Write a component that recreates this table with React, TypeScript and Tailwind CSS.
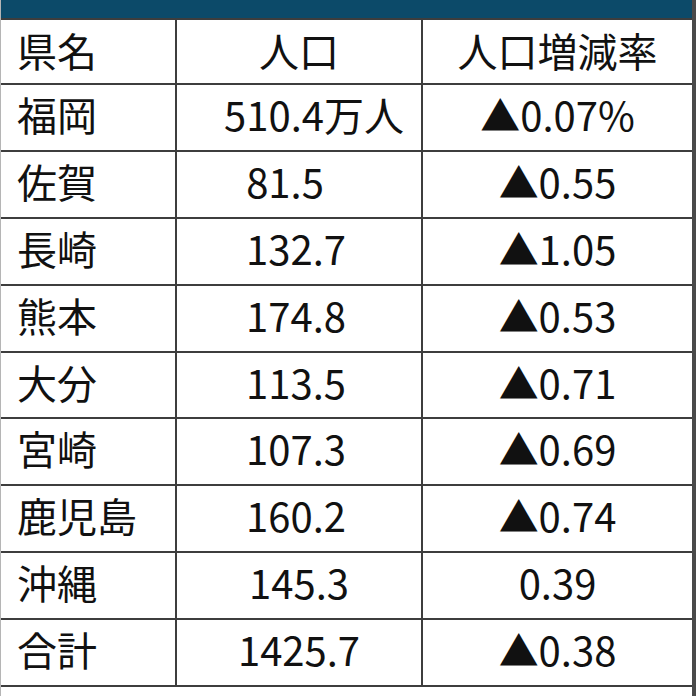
import React from "react";

type Row = { pref: string; pop: string; rate: string; popClass?: string };

const rows: Row[] = [
  { pref: "福岡", pop: "510.4万人", rate: "▲0.07%", popClass: "pl-[30px]" },
  { pref: "佐賀", pop: "81.5", rate: "▲0.55", popClass: "pr-[28px]" },
  { pref: "長崎", pop: "132.7", rate: "▲1.05", popClass: "pr-[6px]" },
  { pref: "熊本", pop: "174.8", rate: "▲0.53", popClass: "pr-[6px]" },
  { pref: "大分", pop: "113.5", rate: "▲0.71", popClass: "pr-[6px]" },
  { pref: "宮崎", pop: "107.3", rate: "▲0.69", popClass: "pr-[6px]" },
  { pref: "鹿児島", pop: "160.2", rate: "▲0.74", popClass: "pr-[6px]" },
  { pref: "沖縄", pop: "145.3", rate: "0.39" },
  { pref: "合計", pop: "1425.7", rate: "▲0.38" },
];

function TableRow({ row, header }: { row: Row; header?: boolean }) {
  const pad = header ? "pb-[4px]" : "pb-[7px]";
  return (
    <div
      className={
        "flex border-b-2 border-[#3d3d3d] box-border " +
        (header ? "h-[65px]" : "h-[66.9px]")
      }
    >
      <div className={"w-[176px] flex items-center pl-[16px] border-r-2 border-[#3d3d3d] " + pad}>
        {row.pref}
      </div>
      <div
        className={
          "w-[246px] flex items-center justify-center border-r-2 border-[#3d3d3d] " +
          pad +
          " " +
          (row.popClass ?? "")
        }
      >
        {row.pop}
      </div>
      <div className={"flex-1 flex items-center justify-center " + pad}>{row.rate}</div>
    </div>
  );
}

export default function App() {
  return (
    <div
      className="w-[696px] h-[696px] bg-white overflow-hidden flex text-[#111] text-[40px] leading-none"
      style={{ fontFamily: '"Noto Sans CJK JP", "Noto Sans", sans-serif' }}
    >
      <div className="flex-1 flex flex-col border-l border-[#b5b5b5]">
        {/* title band, cut off at the top */}
        <div className="h-[18px] bg-[#0c4a69] border-b-2 border-[#3d3d3d] box-content" />
        <TableRow row={{ pref: "県名", pop: "人口", rate: "人口増減率" }} header />
        {rows.map((r) => (
          <TableRow key={r.pref} row={r} />
        ))}
      </div>
      <div className="w-[4px] bg-[#4a4a4a]" />
    </div>
  );
}
